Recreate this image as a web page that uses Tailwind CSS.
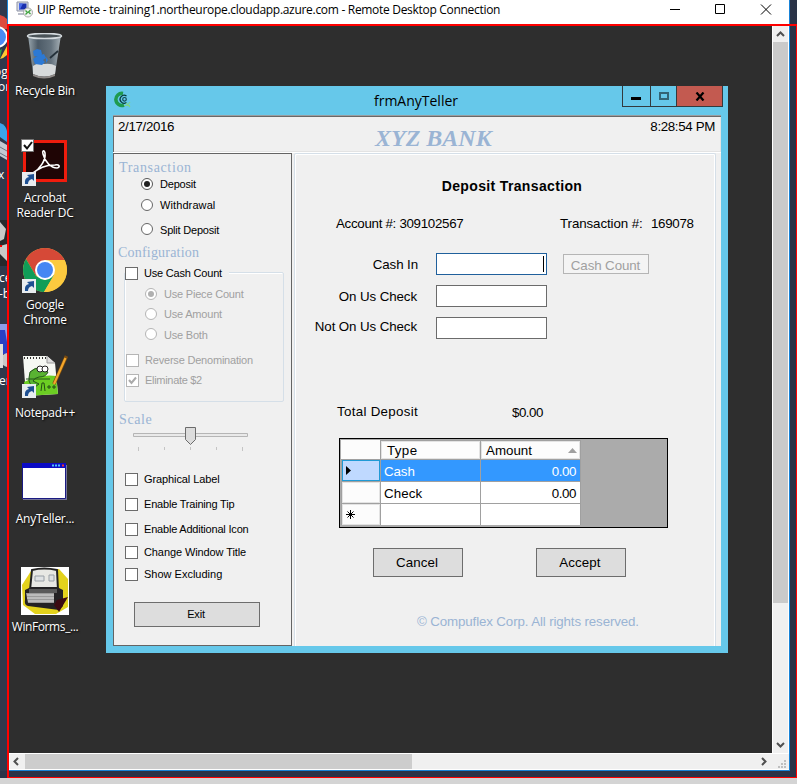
<!DOCTYPE html>
<html lang="en">
<head>
<meta charset="utf-8">
<title>UIP Remote - Remote Desktop Connection</title>
<script src="https://cdn.jsdelivr.net/npm/@tailwindcss/browser@4"></script>
</head>
<body class="w-[797px] h-[784px] overflow-hidden bg-[#2b3347] text-black">
<div class="relative w-[797px] h-[784px] flex flex-col overflow-hidden bg-[#2b3347]">
  <div class="flex h-[771px]">
    <!-- desktop behind the window -->
    <div class="w-[7px] h-[771px] shrink-0 overflow-hidden bg-[#30384c]">
      <svg width="7" height="771" viewBox="0 0 7 771" font-family="'Open Sans',sans-serif" font-size="12" fill="#fff">
        <path d="M0 15q4 1 7 4v10H0z" fill="#dd4b3e"/><circle cx="-3" cy="37" r="10" fill="#4a8af4" stroke="#fff" stroke-width="2"/><path d="M0 50l2-1-2 9z" fill="#2ba24c"/><path d="M7 46v9q-3 3-7 4z" fill="#fcc934"/>
        <text x="-6" y="76">og</text><text x="-2" y="91">or</text>
        <path d="M0 123q6 2 7 8v11l-7-5z" fill="#3ba4ea"/><path d="M0 141l7 4v15l-7-4z" fill="#c3c9d2"/><path d="M0 147l7 4M0 153l7 4" stroke="#6d7583"/>
        <text x="-2" y="179">x t</text>
        <path d="M0 220h7v46H0z" fill="#27292c"/><path d="M0 222l6 7-2 10-4 2zM7 244l-7 2v8l7 7z" fill="#c9c9c9"/><path d="M0 246h2" stroke="#f00" stroke-width="2"/>
        <text x="-1" y="282">ce</text><text x="-1" y="298">-b</text>
        <path d="M0 324h7v30H0z" fill="#8d9be8"/><path d="M0 330h5l2 12v12H0z" fill="#2a3fc4"/><circle cx="8" cy="360" r="7" fill="#c8c8c8"/><path d="M0 344h3v24H0z" fill="#ddd"/>
        <text x="-1" y="385">er</text>
      </svg>
    </div>
    <!-- remote desktop window -->
    <div class="w-[783px] h-[771px] flex flex-col bg-white border-l border-r border-b border-[#1883d7]">
      <div class="h-[25px] flex items-start shrink-0">
        <svg class="ml-[8px] mt-[1px]" width="18" height="17" viewBox="0 0 18 17"><path d="M1 1h11v9H1z" fill="#d8dce8" stroke="#8d93a5"/><path d="M3 2.500h7.500v6H3z" fill="#1a2fae"/><path d="M3 2.500h4l-3 6H3z" fill="#4a6be8"/><path d="M2 12h8v2H2z" fill="#b9bcc8"/><circle cx="12" cy="11.500" r="4.500" fill="#f2f2f2" stroke="#a8a8a8"/><path d="M9.500 9.500l2 2-2 2M14.500 9l-2 2 2 2" stroke="#3fa33f" fill="none" stroke-width="1.300"/></svg>
        <span class="ml-[3px] mt-[2px] leading-[16px] text-[12px] tracking-[-0.3px] whitespace-nowrap font-['Open_Sans',sans-serif]">UIP Remote - training1.northeurope.cloudapp.azure.com - Remote Desktop Connection</span>
        <svg class="ml-auto mr-[16px]" width="104" height="20" viewBox="0 0 104 20" fill="none" stroke="#000"><path d="M1 9.500h10M46.500 4.500h9v9h-9z"/><path d="M92 4.500l10 10M102 4.500l-10 10"/></svg>
      </div>
      <div class="h-[728px] flex">
        <!-- remote session -->
        <main class="relative w-[764px] h-[728px] shrink-0 bg-[#2e2e2e] overflow-hidden">
          <nav class="w-[74px] pt-[8px] flex flex-col items-center text-white text-center text-[12px] leading-[15px] tracking-[-0.25px] font-['Open_Sans',sans-serif] whitespace-nowrap [text-shadow:1px_1px_2px_#000]">
            <div class="h-[107px] flex flex-col items-center"><svg width="40" height="46" viewBox="0 0 40 46"><defs><linearGradient id="g" x2="1"><stop stop-color="#98a5ad"/><stop offset=".3" stop-color="#4c5a66"/><stop offset=".7" stop-color="#65737e"/><stop offset="1" stop-color="#a5afb5"/></linearGradient></defs><path d="M3 2l5 39q12 6 22 0l6-39z" fill="url(#g)"/><ellipse cx="19.500" cy="3" rx="17" ry="2.600" fill="#4b5459" stroke="#d5dbdf" stroke-width="1.500"/><path d="M8 33q5-4 11-2 7-1 12 2l-1 8q-11 5-22 0z" fill="#d7dadb"/><path d="M8 41q11 5 22 0v2q-11 5-22 0z" fill="#8f8a88"/><path d="M8 18l4-2 4 1 1 4-3 3-5-1zM15 22l4-1 2 4-3 2 2 2-3 3-7-1-2-5 3-2zM21 24l2 3-2 3z" fill="#2c79d5"/><path d="M33 18l-8 7" stroke="#25313a" stroke-width="1.800" fill="none"/></svg><span class="mt-[4px]">Recycle Bin</span></div>
            <div class="h-[107px] flex flex-col items-center"><svg class="overflow-visible" width="46" height="46" viewBox="0 0 46 46"><path d="M2.500 1.500h41v39h-41z" fill="#1f0505" stroke="#f01c0d" stroke-width="3"/><path d="M11 33C18 29 24 20 23 13c-1-4-3-2-2 1 2 8 8 14 14 14 4-1 2-4-2-3-8 0-17 3-22 9-2 2-3 0-1-1z" fill="none" stroke="#fff" stroke-width="1.600"/><path d="M-.500-.500h12v12h-12z" fill="#fff" stroke="#777"/><path d="M2 5l3 3.500L10 2" fill="none" stroke="#111" stroke-width="2"/><g id="sc"><path d="M0 32h14v14H0z" fill="#e8ecef"/><path d="M3 44q-1-6 4-7l-2-2 7-1v7l-2-2q-4 1-4 5z" fill="#1d4f92"/></g></svg><span class="mt-[4px]">Acrobat<br>Reader DC</span></div>
            <div class="h-[108px] flex flex-col items-center"><svg width="46" height="46" viewBox="0 0 46 46"><circle cx="23" cy="23" r="22" fill="#fcca3f"/><path d="M4 12A22 22 0 0 1 42 12L42 13H23L14 29z" fill="#d64937"/><path d="M4 12A22 22 0 0 0 22 45L32 28 23 33 14 29z" fill="#109d58"/><path d="M42.500 13A22 22 0 0 1 22 45l10-17V13z" fill="#fcca3f"/><circle cx="23" cy="23" r="10" fill="#fff"/><circle cx="23" cy="23" r="8" fill="#4587f3"/><use href="#sc"/></svg><span class="mt-[4px]">Google<br>Chrome</span></div>
            <div class="h-[106px] flex flex-col items-center"><svg width="46" height="44" viewBox="0 0 46 44"><path d="M1 1h24l8 7 3 31-32 2z" fill="#f6f8f3"/><path d="M2 27q16-8 32-6l2 18-32 2z" fill="#6cce23"/><path d="M25 1v7h8" fill="#ddd" stroke="#999"/><path d="M2 3h23" stroke="#333" stroke-width="2" stroke-dasharray="1 2"/><path d="M8 17q5-5 11-4l7 4q-2 5-9 5-5 1-6 4l6 3-4 3q-7-3-6-9z" fill="#59b332" stroke="#24551a"/><path d="M4 24h24" stroke="#24551a"/><circle cx="18" cy="14" r="3" fill="#fff" stroke="#222"/><circle cx="23" cy="14" r="3" fill="#fff" stroke="#222"/><path d="M19 36l1-8h2l1 8M25 32h4M27 30v4M30 32h4M32 30v4" stroke="#234d15" fill="none"/><path d="M44.500 1L32 29" stroke="#7a4b10" stroke-width="3.500"/><path d="M43.500 3L32 29" stroke="#f4a62a" stroke-width="2.200"/><use href="#sc" y="-3"/></svg><span class="mt-[6px]">Notepad++</span></div>
            <div class="h-[106px] flex flex-col items-center"><svg width="46" height="44" viewBox="0 0 46 44"><path d="M1 4h44v35H1z" fill="#74749a"/><path d="M.500 2.500h43v35h-43z" fill="#fff" stroke="#1b1b83"/><path d="M0 2h44v5H0z" fill="#0b0bc4"/><path d="M30 4.500h9" stroke="#4fc3f7" stroke-width="2" stroke-dasharray="2 1"/><path d="M40 4.500h2" stroke="#e33" stroke-width="2"/></svg><span class="mt-[6px]">AnyTeller...</span></div>
            <div class="flex flex-col items-center tracking-[-0.4px]"><svg width="48" height="48" viewBox="0 0 48 48"><path d="M0 0h48v48H0z" fill="#fff"/><path d="M10 4l28-2 9 10v28l-12 7H14L2 38 1 18z" fill="#e3d21c"/><path d="M11 3q12-3 25 0l1 20H9z" fill="#e8e8e4" stroke="#222" stroke-width="2"/><path d="M14 9h9v5h-9zM28 8h5v6h-5z" fill="#dfe2e4" stroke="#9aa0a6"/><path d="M4 23l6-3h26l6 3v16l-4 4-31-4q-4-1-3-6z" fill="#242224"/><path d="M8 22h28v4H8z" fill="#5a5a5a"/><path d="M5 26h28v10H7z" fill="#9a9a9a"/><path d="M6 28h27M6 31h27M7 34h26" stroke="#ddd"/><path d="M36 33l11-3-9 15-5-7z" fill="#3b0b12"/></svg><span class="mt-[4px]">WinForms_...</span></div>
          </nav>

          <!-- teller form -->
          <section class="absolute left-[98px] top-[61px] w-[622px] h-[567px] bg-[#66c8ea] font-['Liberation_Sans',sans-serif] whitespace-nowrap">
            <header class="h-[29px] flex items-start">
              <svg class="ml-[8px] mt-[5px]" width="18" height="18" viewBox="0 0 18 18" fill="none"><path d="M9 2.500A6 6 0 1 0 10 14" stroke="#1f9a4e" stroke-width="3.500"/><path d="M12.500 5A4 4 0 1 0 12.500 11.500" stroke="#063b3a" stroke-width="1.300"/><circle cx="10.500" cy="8.300" r="1.800" stroke="#12474f" stroke-width="1.200"/><path d="M10 14.500h6M12 12l4 4M16 11l-3 4" stroke="#7fd58c" stroke-width="1.200"/></svg>
              <h1 class="ml-[104px] w-[360px] mt-[6px] text-center text-[14px] leading-[18px] font-['Open_Sans',sans-serif]">frmAnyTeller</h1>
              <div class="ml-[26px] flex h-[21px] w-[101px] border border-t-0 border-[#333a3d]">
                <div class="w-[28px] border-r border-[#333a3d] pt-[11px] pl-[8px]"><div class="w-[10px] h-[3px] bg-black"></div></div>
                <div class="w-[26px] border-r border-[#333a3d] pt-[6px] pl-[8px]"><div class="w-[10px] h-[8px] border-2 border-[#336475]"></div></div>
                <div class="w-[45px] bg-[#c35a50] flex justify-center pt-[6px]"><svg width="10" height="9" viewBox="0 0 10 9"><path d="M1.500.500l7 8M8.500.500l-7 8" stroke="#000" stroke-width="2.200"/></svg></div>
              </div>
            </header>
            <div class="ml-[7px] w-[608px] h-[531px] flex flex-col bg-[#f0f0f0] border-t border-[#9a9da0]">
              <div class="h-[36px] border-t border-l border-[#696969] flex pl-[4px] pr-[5px] pt-[2px] text-[13.333px] leading-[15px] tracking-[-0.35px] shadow-[inset_-1px_-1px_0_#e3e3e3]">
                <span class="w-[257px]">2/17/2016</span>
                <span class="mt-[7px] text-[24px] leading-[24px] tracking-normal font-bold italic text-[#9ab4d4] font-['Liberation_Serif',serif]">XYZ BANK</span>
                <span class="ml-auto pr-px">8:28:54 PM</span>
              </div>
              <div class="h-px bg-white"></div>
              <div class="flex h-[493px]">
                <!-- options -->
                <aside class="w-[179px] h-[493px] border border-[#646464] pt-[4px] text-[11px] tracking-[-0.2px]">
                  <h2 class="h-[18px] pl-[5px] flex items-center text-[14px] tracking-[0.65px] text-[#9ab4d4] font-['Liberation_Serif',serif]">Transaction</h2>
                  <label class="h-[15px] pl-[27px] flex items-center gap-[7px]"><b class="w-[12px] h-[12px] rounded-full border border-[#555] bg-white flex items-center justify-center"><b class="w-[6px] h-[6px] rounded-full bg-[#222]"></b></b><span class="pt-[2px]">Deposit</span></label>
                  <label class="h-[27px] pl-[27px] flex items-center gap-[7px]"><b class="w-[12px] h-[12px] rounded-full border border-[#666] bg-white"></b><span class="pt-[2px] tracking-[0.1px]">Withdrawal</span></label>
                  <label class="h-[22px] pl-[27px] flex items-center gap-[7px]"><b class="w-[12px] h-[12px] rounded-full border border-[#666] bg-white"></b><span class="pt-[2px]">Split Deposit</span></label>
                  <h2 class="h-[26px] pb-[2px] pl-[4px] flex items-center text-[14px] tracking-[0.2px] text-[#9ab4d4] font-['Liberation_Serif',serif]">Configuration</h2>
                  <fieldset class="mt-[6px] ml-[10px] w-[160px] h-[130px] rounded-[2px] border border-[#d5dfe8] text-[#a0a0a0] shadow-[inset_1px_1px_0_#fff]">
                    <label class="-mt-[7px] w-[104px] h-[14px] flex items-center gap-[6px] bg-[#f0f0f0] text-black"><b class="w-[13px] h-[13px] border border-[#6b6b6b] bg-white"></b>Use Cash Count</label>
                    <label class="h-[27px] pl-[20px] flex items-center gap-[7px]"><b class="w-[12px] h-[12px] rounded-full border border-[#b5b5b5] bg-white flex items-center justify-center"><b class="w-[6px] h-[6px] rounded-full bg-[#b0b0b0]"></b></b><span class="pt-px">Use Piece Count</span></label>
                    <label class="h-[13px] pl-[20px] flex items-center gap-[7px]"><b class="w-[12px] h-[12px] rounded-full border border-[#b5b5b5] bg-white"></b><span class="pt-px">Use Amount</span></label>
                    <label class="h-[28px] pl-[20px] flex items-center gap-[7px]"><b class="w-[12px] h-[12px] rounded-full border border-[#b5b5b5] bg-white"></b><span class="pt-[2px]">Use Both</span></label>
                    <label class="h-[24px] pl-px flex items-center gap-[6px]"><b class="w-[13px] h-[13px] border border-[#b5b5b5] bg-white"></b>Reverse Denomination</label>
                    <label class="h-[16px] pl-px flex items-center gap-[6px] tracking-[-0.3px]"><b class="w-[13px] h-[13px] border border-[#b5b5b5] bg-white"><svg width="11" height="11" viewBox="0 0 11 11"><path d="M2 5l2.500 3L9 2.500" fill="none" stroke="#aaa" stroke-width="2"/></svg></b>Eliminate $2</label>
                  </fieldset>
                  <h2 class="mt-[9px] h-[16px] pl-[5px] flex items-center text-[14px] tracking-[0.6px] text-[#9ab4d4] font-['Liberation_Serif',serif]">Scale</h2>
                  <svg class="block ml-[19px]" width="116" height="24" viewBox="0 0 116 24"><path d="M.500 6.500h114v3H.500z" fill="#e9e9e9" stroke="#b5b5b5"/><path d="M5.500 20v4M31.500 20v3M57.500 20v3M83.500 20v3M109.500 20v4" stroke="#c4c4c4"/><path d="M52.500.500h10v12l-5 5-5-5z" fill="#dcdcdc" stroke="#6b6b6b"/></svg>
                  <div class="pl-[11px] mt-[16px]">
                    <label class="h-[25px] flex items-center gap-[6px]"><b class="w-[13px] h-[13px] border border-[#6b6b6b] bg-white"></b><span class="tracking-[-0.1px]">Graphical Label</span></label>
                    <label class="h-[25px] flex items-center gap-[6px]"><b class="w-[13px] h-[13px] border border-[#6b6b6b] bg-white"></b>Enable Training Tip</label>
                    <label class="h-[25px] flex items-center gap-[6px]"><b class="w-[13px] h-[13px] border border-[#6b6b6b] bg-white"></b>Enable Additional Icon</label>
                    <label class="h-[21px] flex items-center gap-[6px] tracking-[-0.1px]"><b class="w-[13px] h-[13px] border border-[#6b6b6b] bg-white"></b>Change Window Title</label>
                    <label class="h-[23px] flex items-center gap-[6px] tracking-normal"><b class="w-[13px] h-[13px] border border-[#6b6b6b] bg-white"></b>Show Excluding</label>
                  </div>
                  <button class="block mt-[16px] ml-[20px] w-[126px] h-[25px] border border-[#6d6d6d] bg-[#ddd] pr-[2px]">Exit</button>
                </aside>
                <!-- deposit transaction -->
                <div class="ml-[2px] w-[422px] h-[493px] rounded-t-[2px] border border-b-0 border-[#d5dfe8] shadow-[inset_1px_1px_0_#fff,inset_-1px_0_0_#fff] text-[13.333px] leading-[16px] tracking-[-0.1px]">
                  <h2 class="mt-[24px] ml-[14px] w-[406px] text-center font-bold text-[14px] tracking-[0.35px]">Deposit Transaction</h2>
                  <div class="mt-[22px] ml-[41px] flex h-[16px]"><span class="w-[224px] tracking-[-0.3px]">Account #: 309102567</span><span class="w-[91px]">Transaction #:</span><span class="tracking-[-0.3px]">169078</span></div>
                  <div class="mt-[21px] grid grid-cols-[124px_111px_86px] gap-x-[17px] auto-rows-[32px]">
                    <span class="text-right pt-[4px] pr-px">Cash In</span><div class="h-[22px] border border-[#20609c] bg-white flex justify-end pr-[2px] pt-[2px]"><b class="w-px h-[16px] bg-black"></b></div><button class="mt-px ml-[-1px] w-[86px] h-[20px] border border-[#b5b5b5] bg-[#f4f4f4] text-[#a0a0a0] leading-[21px] pr-px">Cash Count</button>
                    <span class="text-right pt-[4px] pr-[2px]">On Us Check</span><div class="h-[22px] border border-[#6b6b6b] bg-white"></div><span></span>
                    <span class="text-right pt-[2px] pr-[2px]">Not On Us Check</span><div class="h-[22px] border border-[#6b6b6b] bg-white"></div><span></span>
                  </div>
                  <div class="mt-[55px] ml-[42px] flex"><span class="w-[175px] tracking-[0.3px]">Total Deposit</span><span class="pt-px tracking-[-0.5px]">$0.00</span></div>
                  <div class="mt-[17px] ml-[44px] w-[329px] h-[90px] border border-black bg-[#ababab] p-px">
                    <div class="grid w-[240px] grid-cols-[39px_99px_99px] grid-rows-[18px_21px_21px_21px] gap-px bg-[#a0a0a0] pt-px">
                      <div class="bg-[#fcfcfc] -mt-px"></div>
                      <div class="bg-[#fcfcfc] border border-[#e3e3e3] pl-[5px] leading-[17px] tracking-[0.4px]">Type</div>
                      <div class="bg-[#fcfcfc] border border-[#e3e3e3] pl-[4px] leading-[17px] tracking-normal flex justify-between">Amount<svg class="mt-[6px] mr-[2px]" width="9" height="5" viewBox="0 0 9 5"><path d="M0 5L4.500 0 9 5z" fill="#a0a0a0"/></svg></div>
                      <div class="bg-[#bfd9ff] border border-[#1f9ad6] ml-px pl-[3px] pt-[5px]"><svg width="5" height="9" viewBox="0 0 5 9"><path d="M0 0l5 4.500L0 9z"/></svg></div>
                      <div class="bg-[#3398ff] text-white pl-[3px] leading-[23px]">Cash</div>
                      <div class="bg-[#3398ff] text-white pr-[4px] text-right leading-[23px] tracking-[-0.4px]">0.00</div>
                      <div class="bg-[#fcfcfc] border border-[#e3e3e3] ml-px"></div>
                      <div class="bg-white pl-[3px] leading-[23px] tracking-[0.1px]">Check</div>
                      <div class="bg-white pr-[4px] text-right leading-[23px] tracking-[-0.4px]">0.00</div>
                      <div class="bg-[#fcfcfc] border border-[#e3e3e3] ml-px pl-[3px] pt-[5px]"><svg width="9" height="9" viewBox="0 0 9 9"><path d="M4.500 0v9M0 4.500h9M1.500 1.500l6 6M7.500 1.500l-6 6" stroke="#000"/></svg></div>
                      <div class="bg-white"></div>
                      <div class="bg-white"></div>
                    </div>
                  </div>
                  <div class="mt-[20px] ml-[78px] flex gap-[73px] tracking-[0.1px]"><button class="w-[90px] h-[29px] border border-[#6d6d6d] bg-[#ddd] pr-[2px]">Cancel</button><button class="w-[90px] h-[29px] border border-[#6d6d6d] bg-[#ddd] pr-[2px]">Accept</button></div>
                  <p class="mt-[37px] ml-[122px] text-[#9ab4d4] tracking-[-0.13px]">© Compuflex Corp. All rights reserved.</p>
                </div>
              </div>
            </div>
          </section>
        </main>
        <div class="w-[17px] h-[728px] bg-[#f0f0f0] border-x border-white flex flex-col items-center">
          <svg class="shrink-0" width="15" height="17" viewBox="0 0 15 17" fill="none" stroke="#505050" stroke-width="2"><path d="M4 11l3.500-3.500L11 11"/></svg>
          <div class="w-[15px] h-[561px] bg-[#cacaca]"></div>
          <svg class="mt-auto" width="15" height="16" viewBox="0 0 15 16" fill="none" stroke="#505050" stroke-width="2"><path d="M4 6l3.500 3.500L11 6"/></svg>
        </div>
      </div>
      <div class="h-[17px] shrink-0 flex bg-[#f0f0f0] border-y border-white">
        <svg width="17" height="15" viewBox="0 0 17 15" fill="none" stroke="#505050" stroke-width="2"><path d="M10 4L6.500 7.500 10 11"/></svg>
        <div class="w-[387px] h-[15px] bg-[#cdcdcd]"></div>
        <svg class="ml-auto" width="17" height="15" viewBox="0 0 17 15" fill="none" stroke="#505050" stroke-width="2"><path d="M7 4l3.500 3.500L7 11"/></svg>
        <svg width="17" height="15" viewBox="0 0 17 15" fill="#bfbfbf"><path d="M12 6h2v2h-2zM9 9h2v2H9zM12 9h2v2h-2zM6 12h2v2H6zM9 12h2v2H9zM12 12h2v2h-2z"/></svg>
      </div>
    </div>
  </div>
  <div class="mt-[7px] h-[6px] bg-[#d4d4d4]"></div>
  <div class="absolute left-[7px] top-[24px] w-[790px] h-[754px] border-t-2 border-l-2 border-r border-b border-[#ff0000]"></div>
</div>
</body>
</html>
